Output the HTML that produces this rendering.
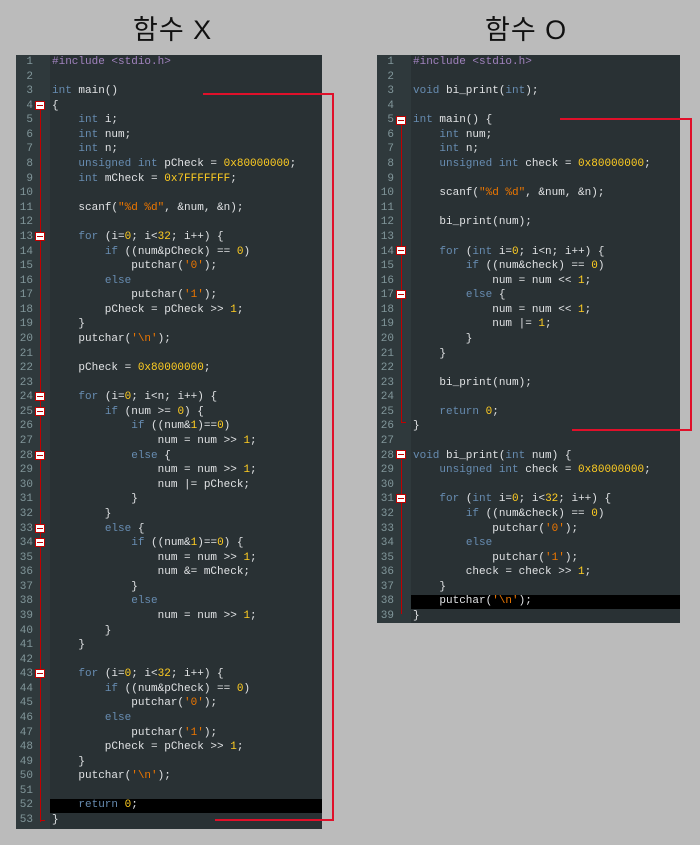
<!DOCTYPE html>
<html><head><meta charset="utf-8"><style>
body{margin:0;width:700px;height:845px;background:#bbbbbb;position:relative;overflow:hidden;font-family:"Liberation Sans","Noto Sans CJK KR",sans-serif}
.t{position:absolute;top:8px;font-size:27px;color:#111;letter-spacing:1px}
.pan{position:absolute;top:55px;background:#293134}
.gut{position:absolute;left:0;top:0;bottom:0;width:34px;background:#2f393c}
.num{position:absolute;left:0;top:0;width:17px;text-align:right;font:11px/14.58px "Liberation Mono",monospace;color:#81969a;margin:0;white-space:pre}
.code{position:absolute;left:36px;top:0;font:11px/14.58px "Liberation Mono",monospace;color:#e0e2e4;margin:0;white-space:pre}
.k{color:#678cb1}.n{color:#ffcd22}.s{color:#ec7600}.p{color:#a082bd}
.hl{position:absolute;left:34px;right:0;height:14.58px;background:#000}
.fb{position:absolute;left:19px;width:8px;height:7px;background:#fff;border:1px solid #c00000}
.fb:after{content:"";position:absolute;left:1px;right:1px;top:3px;height:1px;background:#c00000}
.vl{position:absolute;left:24px;width:1px;background:#c00000}
.rl{position:absolute;background:#e0102a}
</style></head><body>
<div class="t" style="left:133px">함수 X</div>
<div class="t" style="left:485px">함수 O</div>

<div class="pan" style="left:16px;width:306px;height:774px">
<div class="gut"></div>
<div class="hl" style="top:743.6px"></div>
<div class="vl" style="top:55px;height:712px"></div>
<div class="vl" style="top:765px;left:24px;width:5px;height:1px"></div>
<div class="fb" style="top:46px"></div>
<div class="fb" style="top:177px"></div>
<div class="fb" style="top:337px"></div>
<div class="fb" style="top:352px"></div>
<div class="fb" style="top:396px"></div>
<div class="fb" style="top:469px"></div>
<div class="fb" style="top:483px"></div>
<div class="fb" style="top:614px"></div>
<pre class="num">1
2
3
4
5
6
7
8
9
10
11
12
13
14
15
16
17
18
19
20
21
22
23
24
25
26
27
28
29
30
31
32
33
34
35
36
37
38
39
40
41
42
43
44
45
46
47
48
49
50
51
52
53</pre>
<pre class="code"><span class="p">#include &lt;stdio.h&gt;</span>

<span class="k">int</span> main()
{
    <span class="k">int</span> i;
    <span class="k">int</span> num;
    <span class="k">int</span> n;
    <span class="k">unsigned int</span> pCheck = <span class="n">0x80000000</span>;
    <span class="k">int</span> mCheck = <span class="n">0x7FFFFFFF</span>;

    scanf(<span class="s">"%d %d"</span>, &amp;num, &amp;n);

    <span class="k">for</span> (i=<span class="n">0</span>; i&lt;<span class="n">32</span>; i++) {
        <span class="k">if</span> ((num&amp;pCheck) == <span class="n">0</span>)
            putchar(<span class="s">'0'</span>);
        <span class="k">else</span>
            putchar(<span class="s">'1'</span>);
        pCheck = pCheck &gt;&gt; <span class="n">1</span>;
    }
    putchar(<span class="s">'\n'</span>);

    pCheck = <span class="n">0x80000000</span>;

    <span class="k">for</span> (i=<span class="n">0</span>; i&lt;n; i++) {
        <span class="k">if</span> (num &gt;= <span class="n">0</span>) {
            <span class="k">if</span> ((num&amp;<span class="n">1</span>)==<span class="n">0</span>)
                num = num &gt;&gt; <span class="n">1</span>;
            <span class="k">else</span> {
                num = num &gt;&gt; <span class="n">1</span>;
                num |= pCheck;
            }
        }
        <span class="k">else</span> {
            <span class="k">if</span> ((num&amp;<span class="n">1</span>)==<span class="n">0</span>) {
                num = num &gt;&gt; <span class="n">1</span>;
                num &amp;= mCheck;
            }
            <span class="k">else</span>
                num = num &gt;&gt; <span class="n">1</span>;
        }
    }

    <span class="k">for</span> (i=<span class="n">0</span>; i&lt;<span class="n">32</span>; i++) {
        <span class="k">if</span> ((num&amp;pCheck) == <span class="n">0</span>)
            putchar(<span class="s">'0'</span>);
        <span class="k">else</span>
            putchar(<span class="s">'1'</span>);
        pCheck = pCheck &gt;&gt; <span class="n">1</span>;
    }
    putchar(<span class="s">'\n'</span>);

    <span class="k">return</span> <span class="n">0</span>;
}</pre>
</div>

<div class="pan" style="left:377px;width:303px;height:568px">
<div class="gut"></div>
<div class="hl" style="top:539.5px"></div>
<div class="vl" style="top:70px;height:298px"></div>
<div class="vl" style="top:367px;width:5px;height:1px"></div>
<div class="vl" style="top:405px;height:154px"></div>
<div class="fb" style="top:61px"></div>
<div class="fb" style="top:191px"></div>
<div class="fb" style="top:235px"></div>
<div class="fb" style="top:395px"></div>
<div class="fb" style="top:439px"></div>
<pre class="num">1
2
3
4
5
6
7
8
9
10
11
12
13
14
15
16
17
18
19
20
21
22
23
24
25
26
27
28
29
30
31
32
33
34
35
36
37
38
39</pre>
<pre class="code"><span class="p">#include &lt;stdio.h&gt;</span>

<span class="k">void</span> bi_print(<span class="k">int</span>);

<span class="k">int</span> main() {
    <span class="k">int</span> num;
    <span class="k">int</span> n;
    <span class="k">unsigned int</span> check = <span class="n">0x80000000</span>;

    scanf(<span class="s">"%d %d"</span>, &amp;num, &amp;n);

    bi_print(num);

    <span class="k">for</span> (<span class="k">int</span> i=<span class="n">0</span>; i&lt;n; i++) {
        <span class="k">if</span> ((num&amp;check) == <span class="n">0</span>)
            num = num &lt;&lt; <span class="n">1</span>;
        <span class="k">else</span> {
            num = num &lt;&lt; <span class="n">1</span>;
            num |= <span class="n">1</span>;
        }
    }

    bi_print(num);

    <span class="k">return</span> <span class="n">0</span>;
}

<span class="k">void</span> bi_print(<span class="k">int</span> num) {
    <span class="k">unsigned int</span> check = <span class="n">0x80000000</span>;

    <span class="k">for</span> (<span class="k">int</span> i=<span class="n">0</span>; i&lt;<span class="n">32</span>; i++) {
        <span class="k">if</span> ((num&amp;check) == <span class="n">0</span>)
            putchar(<span class="s">'0'</span>);
        <span class="k">else</span>
            putchar(<span class="s">'1'</span>);
        check = check &gt;&gt; <span class="n">1</span>;
    }
    putchar(<span class="s">'\n'</span>);
}</pre>
</div>

<div class="rl" style="left:203px;top:93px;width:131px;height:2px"></div>
<div class="rl" style="left:332px;top:93px;width:2px;height:728px"></div>
<div class="rl" style="left:215px;top:819px;width:119px;height:2px"></div>
<div class="rl" style="left:560px;top:118px;width:132px;height:2px"></div>
<div class="rl" style="left:690px;top:118px;width:2px;height:313px"></div>
<div class="rl" style="left:572px;top:429px;width:120px;height:2px"></div>
</body></html>
